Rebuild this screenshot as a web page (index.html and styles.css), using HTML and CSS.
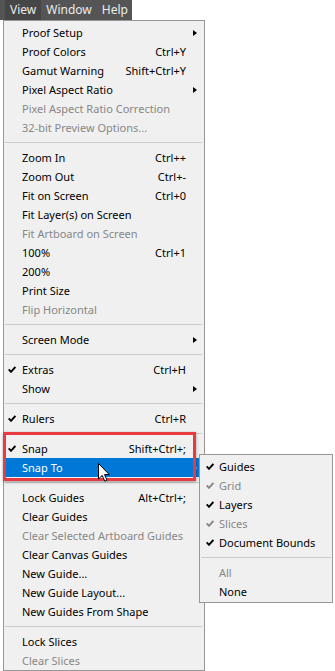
FILE: index.html
```html
<!DOCTYPE html>
<html lang="en">
<head>
  <meta charset="UTF-8">
  <title>View menu</title>
  <link rel="stylesheet" href="styles.css">
</head>
<body>
  <div class="menubar">
    <span class="bar-item active">View</span>
    <span class="bar-item">Window</span>
    <span class="bar-item">Help</span>
  </div>

  <div class="menu main-menu">
    <div class="row"><span class="chk"></span><span class="label">Proof Setup</span><span class="key"></span><span class="arrow sub"></span></div>
    <div class="row"><span class="chk"></span><span class="label">Proof Colors</span><span class="key">Ctrl+Y</span><span class="arrow"></span></div>
    <div class="row"><span class="chk"></span><span class="label">Gamut Warning</span><span class="key">Shift+Ctrl+Y</span><span class="arrow"></span></div>
    <div class="row"><span class="chk"></span><span class="label">Pixel Aspect Ratio</span><span class="key"></span><span class="arrow sub"></span></div>
    <div class="row off"><span class="chk"></span><span class="label">Pixel Aspect Ratio Correction</span><span class="key"></span><span class="arrow"></span></div>
    <div class="row off"><span class="chk"></span><span class="label">32-bit Preview Options...</span><span class="key"></span><span class="arrow"></span></div>
    <div class="sep"></div>
    <div class="row"><span class="chk"></span><span class="label">Zoom In</span><span class="key">Ctrl++</span><span class="arrow"></span></div>
    <div class="row"><span class="chk"></span><span class="label">Zoom Out</span><span class="key">Ctrl+-</span><span class="arrow"></span></div>
    <div class="row"><span class="chk"></span><span class="label">Fit on Screen</span><span class="key">Ctrl+0</span><span class="arrow"></span></div>
    <div class="row"><span class="chk"></span><span class="label">Fit Layer(s) on Screen</span><span class="key"></span><span class="arrow"></span></div>
    <div class="row off"><span class="chk"></span><span class="label">Fit Artboard on Screen</span><span class="key"></span><span class="arrow"></span></div>
    <div class="row"><span class="chk"></span><span class="label">100%</span><span class="key">Ctrl+1</span><span class="arrow"></span></div>
    <div class="row"><span class="chk"></span><span class="label">200%</span><span class="key"></span><span class="arrow"></span></div>
    <div class="row"><span class="chk"></span><span class="label">Print Size</span><span class="key"></span><span class="arrow"></span></div>
    <div class="row off"><span class="chk"></span><span class="label">Flip Horizontal</span><span class="key"></span><span class="arrow"></span></div>
    <div class="sep"></div>
    <div class="row"><span class="chk"></span><span class="label">Screen Mode</span><span class="key"></span><span class="arrow sub"></span></div>
    <div class="sep"></div>
    <div class="row"><span class="chk"><svg viewBox="0 0 8 7" width="8" height="7"><path d="M0.7 3.4 L3 5.8 L7.4 0.9"/></svg></span><span class="label">Extras</span><span class="key">Ctrl+H</span><span class="arrow"></span></div>
    <div class="row"><span class="chk"></span><span class="label">Show</span><span class="key"></span><span class="arrow sub"></span></div>
    <div class="sep"></div>
    <div class="row"><span class="chk"><svg viewBox="0 0 8 7" width="8" height="7"><path d="M0.7 3.4 L3 5.8 L7.4 0.9"/></svg></span><span class="label">Rulers</span><span class="key">Ctrl+R</span><span class="arrow"></span></div>
    <div class="sep"></div>
    <div class="callout">
      <div class="row"><span class="chk"><svg viewBox="0 0 8 7" width="8" height="7"><path d="M0.7 3.4 L3 5.8 L7.4 0.9"/></svg></span><span class="label">Snap</span><span class="key">Shift+Ctrl+;</span><span class="arrow"></span></div>
      <div class="row hot"><span class="chk"></span><span class="label">Snap To</span><span class="key"></span><span class="arrow sub"></span>
        <svg class="cursor" viewBox="0 0 12 19" width="12" height="19"><path d="M0.5 0.5 L0.5 16 L4.2 12.4 L6.8 18.2 L9 17.2 L6.5 11.6 L11.3 11.6 Z"/></svg>
        <div class="menu submenu">
          <div class="row"><span class="chk"><svg viewBox="0 0 8 7" width="8" height="7"><path d="M0.7 3.4 L3 5.8 L7.4 0.9"/></svg></span><span class="label">Guides</span></div>
          <div class="row off"><span class="chk"><svg viewBox="0 0 8 7" width="8" height="7"><path d="M0.7 3.4 L3 5.8 L7.4 0.9"/></svg></span><span class="label">Grid</span></div>
          <div class="row"><span class="chk"><svg viewBox="0 0 8 7" width="8" height="7"><path d="M0.7 3.4 L3 5.8 L7.4 0.9"/></svg></span><span class="label">Layers</span></div>
          <div class="row off"><span class="chk"><svg viewBox="0 0 8 7" width="8" height="7"><path d="M0.7 3.4 L3 5.8 L7.4 0.9"/></svg></span><span class="label">Slices</span></div>
          <div class="row"><span class="chk"><svg viewBox="0 0 8 7" width="8" height="7"><path d="M0.7 3.4 L3 5.8 L7.4 0.9"/></svg></span><span class="label">Document Bounds</span></div>
          <div class="sep"></div>
          <div class="row off"><span class="chk"></span><span class="label">All</span></div>
          <div class="row"><span class="chk"></span><span class="label">None</span></div>
        </div>
      </div>
    </div>
    <div class="sep"></div>
    <div class="row"><span class="chk"></span><span class="label">Lock Guides</span><span class="key">Alt+Ctrl+;</span><span class="arrow"></span></div>
    <div class="row"><span class="chk"></span><span class="label">Clear Guides</span><span class="key"></span><span class="arrow"></span></div>
    <div class="row off"><span class="chk"></span><span class="label">Clear Selected Artboard Guides</span><span class="key"></span><span class="arrow"></span></div>
    <div class="row"><span class="chk"></span><span class="label">Clear Canvas Guides</span><span class="key"></span><span class="arrow"></span></div>
    <div class="row"><span class="chk"></span><span class="label">New Guide...</span><span class="key"></span><span class="arrow"></span></div>
    <div class="row"><span class="chk"></span><span class="label">New Guide Layout...</span><span class="key"></span><span class="arrow"></span></div>
    <div class="row"><span class="chk"></span><span class="label">New Guides From Shape</span><span class="key"></span><span class="arrow"></span></div>
    <div class="sep"></div>
    <div class="row"><span class="chk"></span><span class="label">Lock Slices</span><span class="key"></span><span class="arrow"></span></div>
    <div class="row off"><span class="chk"></span><span class="label">Clear Slices</span><span class="key"></span><span class="arrow"></span></div>
  </div>
</body>
</html>
```

FILE: styles.css
```css
body {
  margin: 0;
  background: #fff;
  font-family: "Noto Sans", "Open Sans", sans-serif;
  font-size: 11px;
  color: #000;
  overflow: hidden;
}

.menubar {
  display: flex;
  width: 127px;
  height: 20px;
  padding-left: 5px;
  background: #555;
}
.bar-item {
  padding: 0 5px;
  line-height: 19px;
  font-size: 12px;
  color: #ececec;
}
.bar-item.active {
  background: #464646;
}

.menu {
  background: #f0f0f0;
  border: 1px solid #979797;
}
.main-menu {
  width: 200px;
  margin-left: 3px;
  padding-top: 2px;
}

.row {
  display: flex;
  align-items: center;
  height: 19px;
  white-space: nowrap;
}
.row.off {
  color: #878787;
}
.row.hot {
  position: relative;
  background: #0078d7;
  color: #fff;
}

.chk {
  width: 18px;
  flex: none;
  display: flex;
  align-items: center;
  padding-left: 4px;
  box-sizing: border-box;
}
.chk svg path {
  fill: none;
  stroke: currentColor;
  stroke-width: 1.9;
}
.label {
  flex: 1;
}
.key {
  text-align: right;
}
.arrow {
  width: 18px;
  flex: none;
  display: flex;
  align-items: center;
  padding-left: 7px;
  box-sizing: border-box;
}
.arrow.sub::before {
  content: "";
  border-left: 4px solid currentColor;
  border-top: 3.5px solid transparent;
  border-bottom: 3.5px solid transparent;
}

.sep {
  height: 11px;
  display: flex;
  align-items: center;
  padding: 0 2px 0 1px;
}
.sep::before {
  content: "";
  flex: 1;
  height: 1px;
  background: #cbcbcb;
}

.callout {
  position: relative;
}
.callout::after {
  content: "";
  position: absolute;
  left: -1px;
  right: 8px;
  top: -7px;
  bottom: -4px;
  border: 3px solid #e83a40;
  box-shadow: 0 1px 3px rgba(0, 0, 0, 0.35);
  pointer-events: none;
  z-index: 1;
}

.submenu {
  position: absolute;
  left: 195px;
  top: -4px;
  width: 132px;
  padding-top: 2px;
  padding-bottom: 1px;
  color: #000;
  z-index: 2;
}
.submenu .chk {
  width: 19px;
  padding-left: 6px;
}
.submenu .sep {
  padding: 0 1px;
}

.cursor {
  position: absolute;
  left: 94px;
  top: 5px;
  z-index: 3;
}
.cursor path {
  fill: #fff;
  stroke: #000;
  stroke-width: 1;
}
```
